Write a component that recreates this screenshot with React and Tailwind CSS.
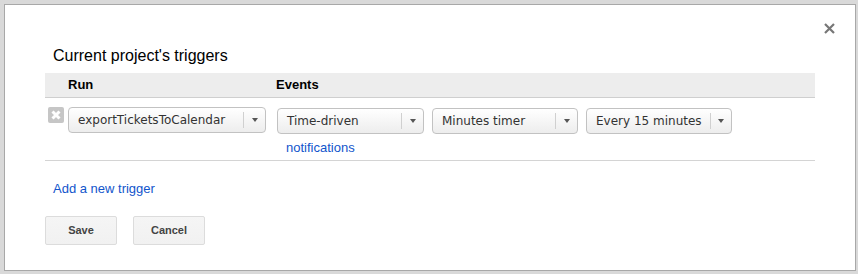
import React from 'react';

const Select = ({ label, width, className = '' }) => (
  <div
    className={`flex items-center h-[26px] rounded-[4px] border border-[#c2c2c2] bg-gradient-to-b from-white to-[#ededed] text-[12px] text-[#333] ${className}`}
    style={width ? { width } : undefined}
  >
    <span className="pl-[9px] flex-1 whitespace-nowrap" style={{ fontFamily: '"DejaVu Sans", sans-serif' }}>
      {label}
    </span>
    <span className="h-[16px] border-l border-[#d0d0d0] ml-[8px]" />
    <span className="w-[21px] flex justify-center">
      <svg width="6" height="4" viewBox="0 0 6 4">
        <path d="M0 0 L6 0 L3 4 Z" fill="#555" />
      </svg>
    </span>
  </div>
);

const RemoveIcon = () => (
  <div className="w-[16px] h-[16px] rounded-[2px] bg-[#c6c6c6] flex items-center justify-center">
    <svg width="10" height="10" viewBox="0 0 10 10">
      <path d="M1.5 1.5 L8.5 8.5 M8.5 1.5 L1.5 8.5" stroke="#fff" strokeWidth="3" />
    </svg>
  </div>
);

export default function App() {
  return (
    <div
      className="w-[858px] h-[274px] bg-[#d9d9d9] pl-[4px] pt-[4px]"
      style={{ fontFamily: '"Liberation Sans", Arial, sans-serif' }}
    >
      <div className="relative w-[852px] h-[267px] bg-white border border-[#a8a8a8] pl-[40px] pr-[40px]">
        {/* close */}
        <button className="absolute left-[819px] top-[18px] w-[11px] h-[11px]">
          <svg width="11" height="11" viewBox="0 0 11 11">
            <path d="M1 1 L10 10 M10 1 L1 10" stroke="#777" strokeWidth="2.2" />
          </svg>
        </button>

        <h2 className="mt-[42px] ml-[8px] text-[16px] leading-[18px] text-black">Current project's triggers</h2>

        {/* table */}
        <div className="mt-[8px] w-[770px]">
          <div className="flex h-[25px] bg-[#ededed] border-b border-[#cfcfcf] text-[13px] font-bold text-black leading-[24px]">
            <div className="w-[23px]" />
            <div className="w-[208px]">Run</div>
            <div>Events</div>
          </div>
          <div className="flex border-b border-[#d4d4d4] pt-[9px] pb-[5px]">
            <div className="w-[23px] pl-[3px]">
              <RemoveIcon />
            </div>
            <div className="w-[208px]">
              <Select label="exportTicketsToCalendar" width="198px" />
            </div>
            <div className="flex flex-col pl-[1px] pt-[1px]">
              <div className="flex gap-[8px]">
                <Select label="Time-driven" width="147px" />
                <Select label="Minutes timer" width="146px" />
                <Select label="Every 15 minutes" width="146px" />
              </div>
              <a className="mt-[6px] ml-[9px] text-[13px] leading-[15px] text-[#15c] cursor-pointer">notifications</a>
            </div>
          </div>
        </div>

        <a className="block mt-[20px] ml-[8px] text-[13px] leading-[15px] text-[#15c] cursor-pointer">Add a new trigger</a>

        <div className="flex gap-[16px] mt-[20px]">
          <button className="w-[72px] h-[29px] rounded-[2px] border border-[#dcdcdc] bg-gradient-to-b from-[#f5f5f5] to-[#f1f1f1] text-[11px] font-bold text-[#444]">
            Save
          </button>
          <button className="w-[72px] h-[29px] rounded-[2px] border border-[#dcdcdc] bg-gradient-to-b from-[#f5f5f5] to-[#f1f1f1] text-[11px] font-bold text-[#444]">
            Cancel
          </button>
        </div>
      </div>
    </div>
  );
}
